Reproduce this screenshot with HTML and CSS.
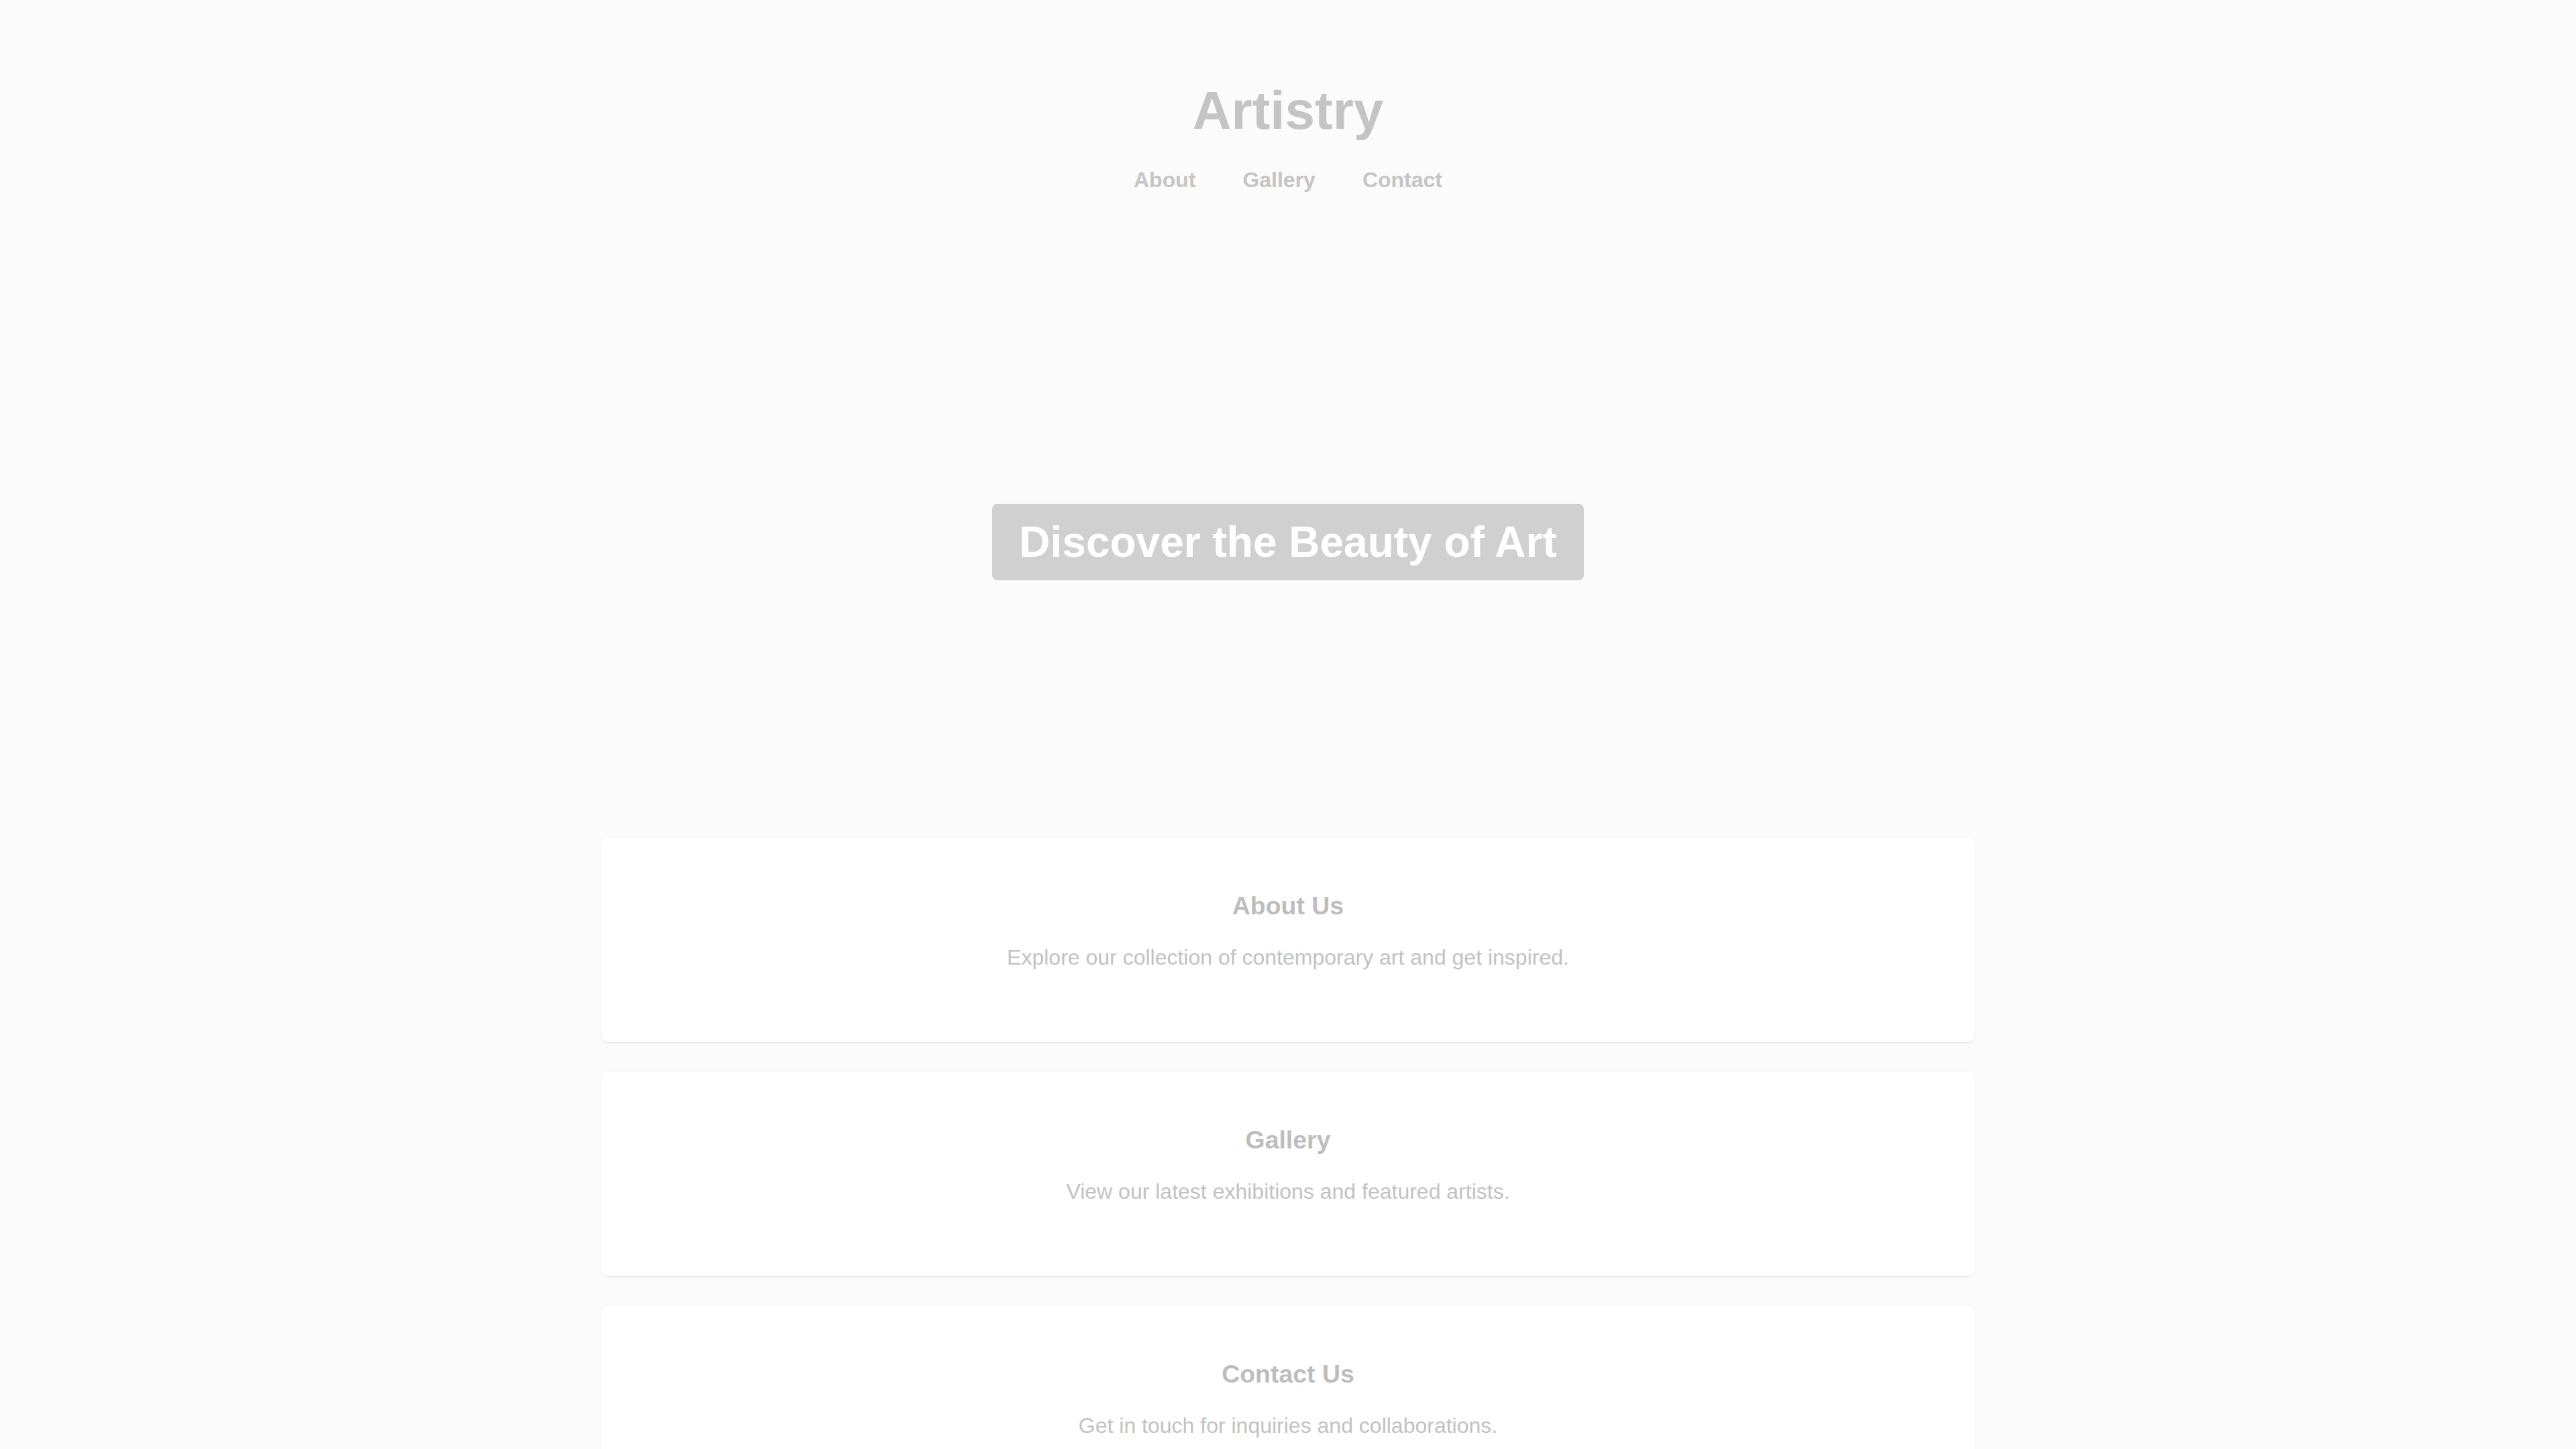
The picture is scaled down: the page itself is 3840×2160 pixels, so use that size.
FILE: index.html
```html
<!DOCTYPE html>
<html lang="en">
<head>
<meta charset="utf-8">
<title>Artistry</title>
<link rel="stylesheet" href="styles.css">
</head>
<body>
<header class="site-header">
  <h1 class="logo">Artistry</h1>
  <nav class="nav">
    <a href="#about">About</a>
    <a href="#gallery">Gallery</a>
    <a href="#contact">Contact</a>
  </nav>
</header>
<section class="hero">
  <h2 class="hero-title">Discover the Beauty of Art</h2>
</section>
<main class="cards">
  <section class="card" id="about">
    <h3>About Us</h3>
    <p>Explore our collection of contemporary art and get inspired.</p>
  </section>
  <section class="card" id="gallery">
    <h3>Gallery</h3>
    <p>View our latest exhibitions and featured artists.</p>
  </section>
  <section class="card" id="contact">
    <h3>Contact Us</h3>
    <p>Get in touch for inquiries and collaborations.</p>
  </section>
</main>
</body>
</html>
```
FILE: styles.css
```css
html, body {
  margin: 0;
  padding: 0;
}
body {
  background: #fbfbfb;
  font-family: "Liberation Sans", Arial, sans-serif;
  color: #c4c4c4;
}
.site-header {
  display: flex;
  flex-direction: column;
  align-items: center;
  padding: 119px 0 80px;
}
.logo {
  margin: 0 0 39px;
  font-size: 80px;
  font-weight: 700;
  line-height: normal;
  color: #c4c4c4;
}
.nav {
  display: flex;
  gap: 70px;
}
.nav a {
  font-size: 32px;
  font-weight: 700;
  color: #c5c5c5;
  text-decoration: none;
}
.hero {
  display: flex;
  justify-content: center;
  padding: 384px 0;
}
.hero-title {
  margin: 0;
  padding: 20px 40px;
  font-size: 64px;
  font-weight: 700;
  line-height: normal;
  color: #ffffff;
  background: #d0d0d0;
  border-radius: 8px;
}
.cards {
  display: flex;
  flex-direction: column;
  gap: 45px;
  width: 2048px;
  margin: 0 auto;
}
.card {
  display: flex;
  flex-direction: column;
  align-items: center;
  height: 304px;
  box-sizing: border-box;
  padding: 80px 40px 0;
  background: #ffffff;
  border-radius: 10px;
  box-shadow: 0 2px 2px rgba(0, 0, 0, 0.07), 0 0 12px rgba(0, 0, 0, 0.02);
}
.card h3 {
  margin: 0 0 37px;
  font-size: 37.44px;
  font-weight: 700;
  line-height: normal;
  color: #bdbdbd;
}
.card p {
  margin: 0;
  font-size: 32px;
  line-height: normal;
  color: #c2c2c2;
}
```
